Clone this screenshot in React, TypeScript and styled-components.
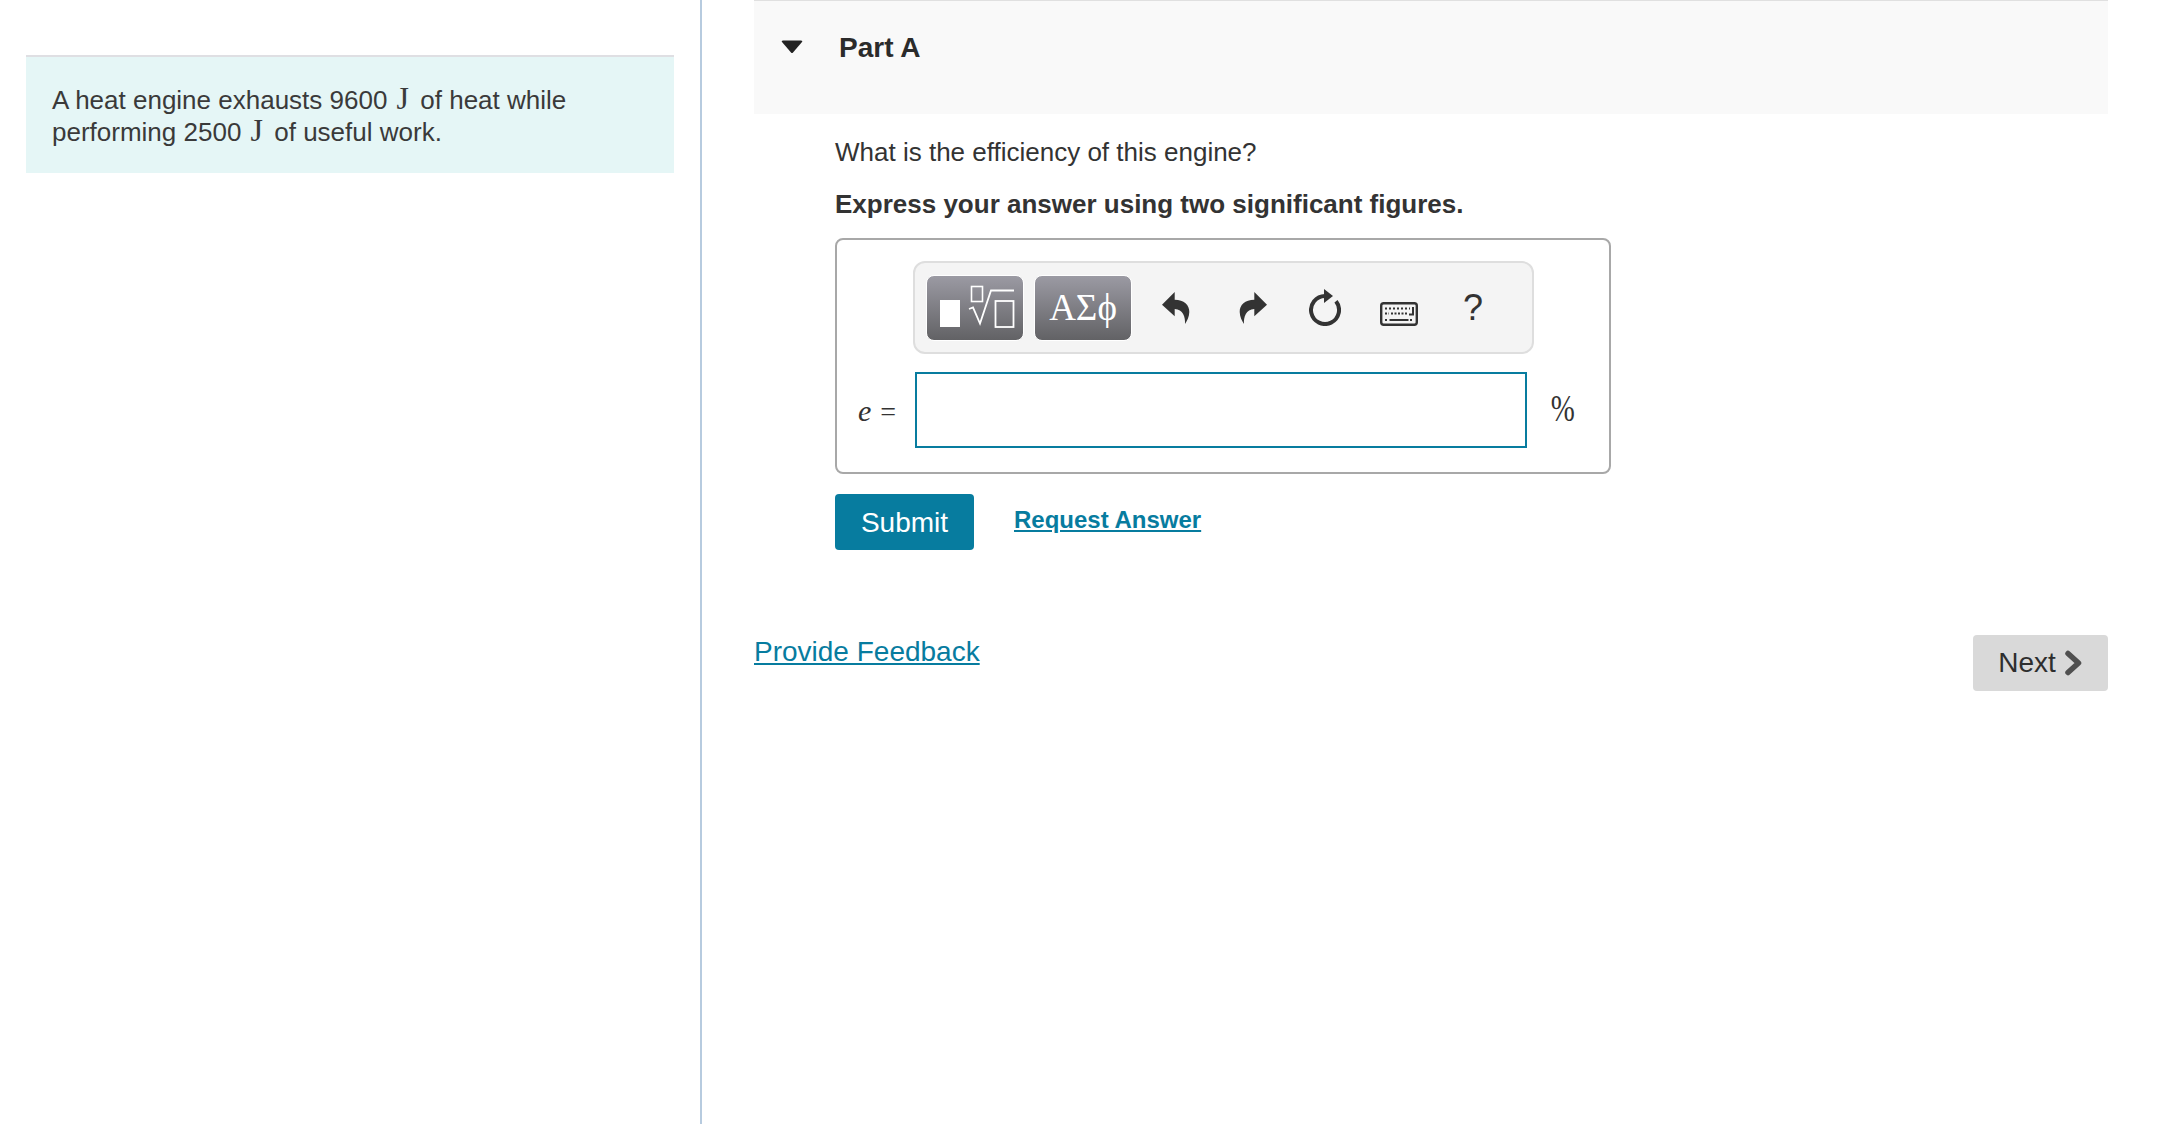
import React from "react";
import styled, { createGlobalStyle } from "styled-components";

const Global = createGlobalStyle`
  html, body { margin: 0; padding: 0; background: #fff; }
  body { font-family: "Liberation Sans", Arial, sans-serif; color: #333; }
`;

const Page = styled.div`
  display: flex;
  width: 2160px;
  height: 1124px;
  overflow: hidden;
`;
const Side = styled.aside`
  box-sizing: border-box;
  width: 702px;
  height: 100%;
  padding: 55px 26px 0 26px;
  border-right: 2px solid #b7cbdf;
`;
const Intro = styled.div`
  box-sizing: border-box;
  height: 118px;
  padding: 27px 26px 0;
  background: #e5f6f6;
  border-top: 2px solid #dfdfe3;
  font-size: 26px;
  line-height: 32px;
  color: #3a3a3a;
`;
const Unit = styled.span`
  font-family: "Liberation Serif", serif;
  font-size: 32px;
  line-height: 20px;
  margin: 0 4px 0 2px;
`;
const Main = styled.main`
  box-sizing: border-box;
  flex: 1;
  padding: 0 52px 0 52px;
`;
const PartHeader = styled.header`
  box-sizing: border-box;
  display: flex;
  align-items: flex-start;
  height: 114px;
  padding: 29px 0 0 27px;
  background: #f9f9f9;
  border-top: 1px solid #e0e0e0;
`;
const Caret = styled.svg`
  width: 22px;
  height: 14px;
  margin: 10px 36px 0 0;
`;
const PartTitle = styled.h2`
  margin: 0;
  font-size: 28px;
  line-height: 36px;
  font-weight: 700;
  color: #2b2b2b;
`;
const Body = styled.section`
  padding: 20px 0 0 81px;
`;
const Prompt = styled.p<{ $bold?: boolean }>`
  margin: 0 0 16px;
  font-size: 26px;
  line-height: 36px;
  font-weight: ${(p) => (p.$bold ? 700 : 400)};
  color: #333;
`;
const AnswerBox = styled.div`
  box-sizing: border-box;
  width: 776px;
  height: 236px;
  padding: 21px 0 0 0;
  border: 2px solid #a8a8a8;
  border-radius: 8px;
`;
const Toolbar = styled.div`
  box-sizing: border-box;
  display: flex;
  align-items: center;
  width: 621px;
  height: 93px;
  margin-left: 76px;
  padding: 0 0 0 11px;
  background: #f4f4f4;
  border: 2px solid #dedede;
  border-radius: 12px;
`;
const TemplateButton = styled.div<{ $last?: boolean }>`
  box-sizing: border-box;
  display: flex;
  align-items: center;
  justify-content: center;
  flex: none;
  width: 98px;
  height: 66px;
  margin-right: ${(p) => (p.$last ? "0" : "10px")};
  border-radius: 8px;
  border: 1px solid #fff;
  background: linear-gradient(#9b9aa3, #626265);
  color: #fff;
  font-family: "Liberation Serif", serif;
  font-size: 37px;
`;
const ToolIcon = styled.svg<{ $gap: number; $w: number; $h: number; $drop?: number }>`
  flex: none;
  width: ${(p) => p.$w}px;
  height: ${(p) => p.$h}px;
  margin-left: ${(p) => p.$gap}px;
  margin-top: ${(p) => p.$drop ?? 0}px;
`;
const Help = styled.span`
  margin-left: 45px;
  font-size: 36px;
  color: #333;
`;
const InputRow = styled.div`
  display: flex;
  align-items: center;
  margin-top: 18px;
`;
const VarLabel = styled.div`
  width: 78px;
  padding: 1px 0 0 21px;
  box-sizing: border-box;
  font-family: "Liberation Serif", serif;
  font-size: 28px;
  white-space: pre;
  color: #333;
`;
const Italic = styled.i`
  font-size: 30px;
  margin-right: 2px;
`;
const AnswerInput = styled.input`
  box-sizing: border-box;
  width: 612px;
  height: 76px;
  border: 2px solid #087c9f;
  outline: none;
  background: #fff;
`;
const Percent = styled.span`
  display: inline-block;
  margin: 0 0 4px 20px;
  font-family: "Liberation Serif", serif;
  font-size: 38px;
  font-weight: 400;
  line-height: 40px;
  color: #333;
  transform: scaleX(0.76);
`;
const Actions = styled.div`
  display: flex;
  align-items: flex-start;
  margin-top: 20px;
`;
const Submit = styled.button`
  width: 139px;
  height: 56px;
  padding: 2px 0 0;
  border: none;
  border-radius: 4px;
  background: #077c9f;
  color: #fff;
  font: 400 28px "Liberation Sans", Arial, sans-serif;
`;
const RequestLink = styled.a`
  margin: 9px 0 0 40px;
  font-size: 24px;
  line-height: 34px;
  font-weight: 700;
  color: #077c9f;
  text-decoration: underline;
`;
const Footer = styled.footer`
  display: flex;
  justify-content: space-between;
  align-items: flex-start;
  margin-top: 85px;
`;
const Feedback = styled.a`
  font-size: 28px;
  line-height: 34px;
  color: #077c9f;
  text-decoration: underline;
`;
const NextButton = styled.button`
  display: flex;
  align-items: center;
  justify-content: center;
  gap: 9px;
  width: 135px;
  height: 56px;
  padding: 0 1px 0 0;
  border: none;
  border-radius: 4px;
  background: #d9d9d9;
  color: #2e2e2e;
  font: 400 28px "Liberation Sans", Arial, sans-serif;
`;

export default function App() {
  return (
    <Page>
      <Global />
      <Side>
        <Intro>
          A heat engine exhausts 9600 <Unit>J</Unit> of heat while
          <br />
          performing 2500 <Unit>J</Unit> of useful work.
        </Intro>
      </Side>
      <Main>
        <PartHeader>
          <Caret viewBox="0 0 22 14">
            <path d="M1 2 Q0 0.5 2 0.5 H20 Q22 0.5 21 2 L12 12.5 Q11 13.5 10 12.5 Z" fill="#222" />
          </Caret>
          <PartTitle>Part A</PartTitle>
        </PartHeader>
        <Body>
          <Prompt>What is the efficiency of this engine?</Prompt>
          <Prompt $bold>Express your answer using two significant figures.</Prompt>
          <AnswerBox>
            <Toolbar>
              <TemplateButton>
                <svg width="96" height="64" viewBox="0 0 96 64" fill="none" stroke="#fff">
                  <rect x="13" y="24" width="20" height="27" fill="#fff" stroke="none" />
                  <rect x="44.5" y="10.5" width="11" height="15" strokeWidth="1.6" />
                  <path d="M42 33 l4 -1.5 l7 16 l11 -33 h23" strokeWidth="1.8" />
                  <rect x="68.5" y="25" width="18" height="26" strokeWidth="1.8" />
                </svg>
              </TemplateButton>
              <TemplateButton $last>ΑΣϕ</TemplateButton>
              <ToolIcon $gap={30} $w={28} $h={32} viewBox="0 0 28 32">
                <path d="M0 12.7 L12.7 0 V7.7 C22 7.7 27.5 13 27.3 20 C27.2 25 25 29 23 32 C23.5 25 21 17.5 12.7 17 V24.3 Z" fill="#333" />
              </ToolIcon>
              <ToolIcon $gap={49} $w={28} $h={32} viewBox="0 0 28 32">
                <path d="M28 12.7 L15.3 0 V7.7 C6 7.7 .5 13 .7 20 C.8 25 3 29 5 32 C4.5 25 7 17.5 15.3 17 V24.3 Z" fill="#333" />
              </ToolIcon>
              <ToolIcon $gap={42} $w={32} $h={37} viewBox="0 0 32 37">
                <path d="M16 7 A14 14 0 1 0 27 12.3" fill="none" stroke="#333" strokeWidth="4" />
                <path d="M15 0 L24 7 L15 14 Z" fill="#333" />
              </ToolIcon>
              <ToolIcon $gap={39} $w={38} $h={24} $drop={12} viewBox="0 0 38 24">
                <rect x="1.2" y="1.2" width="35.6" height="21.6" rx="2.5" fill="#f4f4f4" stroke="#333" strokeWidth="2.4" />
                <path d="M5 6.5 h25 M5 18 h2 M30 18 h3" stroke="#333" strokeWidth="2" strokeDasharray="2 2" fill="none" />
                <path d="M5 11.5 h4 M11 11.5 h16" stroke="#333" strokeWidth="2" strokeDasharray="2 1.5" fill="none" />
                <path d="M9.5 18 h19 M33 5 v7.5 h-4" stroke="#333" strokeWidth="2" fill="none" />
              </ToolIcon>
              <Help>?</Help>
            </Toolbar>
            <InputRow>
              <VarLabel>
                <Italic>e</Italic> =
              </VarLabel>
              <AnswerInput aria-label="e" />
              <Percent>%</Percent>
            </InputRow>
          </AnswerBox>
          <Actions>
            <Submit>Submit</Submit>
            <RequestLink href="#">Request Answer</RequestLink>
          </Actions>
        </Body>
        <Footer>
          <Feedback href="#">Provide Feedback</Feedback>
          <NextButton>
            Next
            <svg width="17" height="26" viewBox="0 0 17 26">
              <path d="M3 3.5 L13.5 13 L3 22.5" fill="none" stroke="#505050" strokeWidth="5.5" strokeLinecap="round" strokeLinejoin="round" />
            </svg>
          </NextButton>
        </Footer>
      </Main>
    </Page>
  );
}
